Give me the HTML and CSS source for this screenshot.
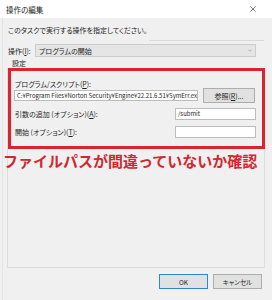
FILE: index.html
```html
<!DOCTYPE html>
<html lang="ja">
<head>
<meta charset="utf-8">
<title>操作の編集</title>
<link rel="stylesheet" href="styles.css">
</head>
<body>
<div class="titlebar">
  <span class="title">操作の編集</span>
  <svg class="close" width="6" height="6" viewBox="0 0 6 6"><path d="M0.3 0.3L5.7 5.7M5.7 0.3L0.3 5.7" stroke="#444" stroke-width="0.7" fill="none"/></svg>
</div>
<div class="pane">
  <div class="instr"><span>このタスクで実行する操作を指定してください。</span><span class="sep"></span></div>
  <div class="action-row">
    <span class="action-label">操作(<u>I</u>):</span>
    <div class="select">
      <span>プログラムの開始</span>
      <svg width="4" height="3" viewBox="0 0 4 3"><path d="M0.3 0.6L2 2.3L3.7 0.6" stroke="#888" stroke-width="0.6" fill="none"/></svg>
    </div>
  </div>
  <div class="legend">設定</div>
  <div class="group">
    <div class="highlight">
      <div class="field-label">プログラム/スクリプト(<u>P</u>):</div>
      <div class="path-row">
        <div class="textbox path">C:¥Program Files¥Norton Security¥Engine¥22.21.6.51¥SymErr.exe</div>
        <div class="btn browse">参照(<u>R</u>)...</div>
      </div>
      <div class="opt-row">
        <span>引数の追加 (オプション)(<u>A</u>):</span>
        <div class="textbox short">/submit</div>
      </div>
      <div class="opt-row second">
        <span>開始 (オプション)(<u>T</u>):</span>
        <div class="textbox short"></div>
      </div>
    </div>
    <div class="note">ファイルパスが間違っていないか確認</div>
  </div>
  <div class="buttons">
    <div class="btn ok">OK</div>
    <div class="btn">キャンセル</div>
  </div>
</div>
</body>
</html>
```

FILE: styles.css
```css
* { box-sizing: border-box; }
html, body { margin: 0; padding: 0; }
body {
  width: 272px;
  height: 300px;
  overflow: hidden;
  background: #f0f0f0;
  font-family: "Noto Sans CJK JP", "Noto Sans", sans-serif;
  font-size: 7px;
  color: #1e1e1e;
  font-feature-settings: "palt";
}
u { text-underline-offset: 1px; text-decoration-thickness: 0.5px; }

.titlebar {
  height: 18px;
  background: #ffffff;
  display: flex;
  align-items: center;
  justify-content: space-between;
  padding: 0 16px 0 6px;
}
.title { font-size: 7.5px; }

.pane {
  margin-left: 2px;
  border-left: 1px solid #e4e4e4;
  height: 282px;
}

.instr {
  height: 23px;
  display: flex;
  align-items: center;
  padding-left: 5px;
}
.sep {
  flex: 1;
  height: 1px;
  background: #d9d9d9;
  align-self: flex-end;
  margin: 0 8px 0 2px;
}

.action-row {
  display: flex;
  align-items: center;
  height: 13px;
  margin-top: 3px;
  padding: 0 16px 0 5px;
}
.action-label { width: 27px; }
.select {
  flex: 1;
  height: 13px;
  background: #e5e5e5;
  border: 1px solid #cccccc;
  display: flex;
  align-items: center;
  justify-content: space-between;
  padding: 0 3px 0 3px;
}

.legend {
  height: 8px;
  line-height: 8px;
  margin-top: 2px;
  padding-left: 9px;
}

.group {
  margin: 1px 7px 0 4px;
  height: 200px;
  border: 1px solid #dcdcdc;
  border-top: none;
}

.highlight {
  height: 81px;
  margin-right: -1px;
  border: 3px solid #dc2431;
}
.field-label {
  margin-top: 9px;
  height: 8px;
  line-height: 8px;
  padding-left: 4px;
}
.path-row {
  display: flex;
  align-items: center;
  gap: 5px;
  height: 15px;
  padding-left: 3px;
}
.textbox {
  height: 11px;
  background: #ffffff;
  border: 1px solid #bdbdbd;
  padding-left: 2px;
  font-size: 6px;
  line-height: 9px;
  white-space: nowrap;
  overflow: hidden;
}
.path { width: 184px; }
.short { width: 81px; height: 12px; line-height: 10px; }

.btn {
  height: 15px;
  background: #e1e1e1;
  border: 1px solid #adadad;
  display: flex;
  align-items: center;
  justify-content: center;
  font-size: 6.5px;
}
.browse { width: 52px; font-size: 7px; }

.opt-row {
  display: flex;
  align-items: center;
  justify-content: space-between;
  height: 12px;
  margin-top: 5px;
  padding: 0 6px 0 4px;
}
.opt-row.second { margin-top: 6px; }

.note {
  margin: 4px 0 0 -5px;
  font-size: 15px;
  line-height: 16px;
  font-weight: 700;
  color: #d3262f;
  white-space: nowrap;
  font-feature-settings: normal;
}

.buttons {
  display: flex;
  justify-content: flex-end;
  gap: 5px;
  margin-top: 6px;
  padding-right: 10px;
}
.buttons .btn { width: 49px; }
.ok { border-color: #2f86d8; }
```
